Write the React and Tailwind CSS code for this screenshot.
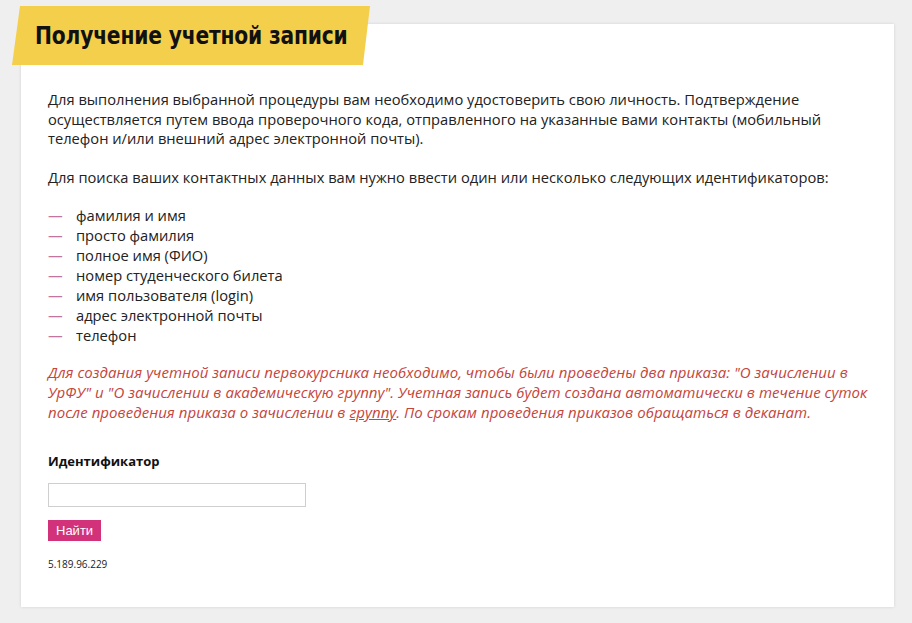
import React from "react";

const items = [
  "фамилия и имя",
  "просто фамилия",
  "полное имя (ФИО)",
  "номер студенческого билета",
  "имя пользователя (login)",
  "адрес электронной почты",
  "телефон",
];

const App = () => {
  return (
    <div className="min-h-[623px] bg-[#efefef] pt-[24px] pl-[21px] pr-[18px] pb-[15px] font-['Open_Sans',sans-serif]">
      <div className="flow-root bg-white shadow-[0_0_3px_rgba(0,0,0,0.12)] min-h-[583px]">
        {/* Title banner */}
        <div className="-ml-[9px] -mt-[18px] w-[358px] h-[59px] bg-[#f4cf4b] [clip-path:polygon(8px_0,100%_0,calc(100%-7px)_100%,0_100%)] flex items-center pl-[23px]">
          <h1 className="font-['DejaVu_Sans_Condensed','DejaVu_Sans',sans-serif] font-bold text-[25px] text-[#111] tracking-[-0.2px] scale-x-[0.9] origin-left whitespace-nowrap">
            Получение учетной записи
          </h1>
        </div>

        <div className="pl-[27px] pr-[12px] pt-[25px] text-[14.7px] leading-[19.5px] text-[#222]">
          <p>
            Для выполнения выбранной процедуры вам необходимо удостоверить свою личность. Подтверждение
            осуществляется путем ввода проверочного кода, отправленного на указанные вами контакты (мобильный
            телефон и/или внешний адрес электронной почты).
          </p>

          <p className="mt-[19px]">
            Для поиска ваших контактных данных вам нужно ввести один или несколько следующих идентификаторов:
          </p>

          <ul className="mt-[18px] leading-[20px]">
            {items.map((t) => (
              <li key={t} className="flex">
                <span className="w-[28px] text-[#c2769f]">—</span>
                <span>{t}</span>
              </li>
            ))}
          </ul>

          <p className="mt-[17px] italic text-[#c4453c] text-[15px] tracking-[0.05px] leading-[20px] whitespace-nowrap">
            Для создания учетной записи первокурсника необходимо, чтобы были проведены два приказа: "О зачислении в
            <br />
            УрФУ" и "О зачислении в академическую группу". Учетная запись будет создана автоматически в течение суток
            <br />
            после проведения приказа о зачислении в <span className="underline">группу</span>. По срокам проведения приказов обращаться в деканат.
          </p>

          <div className="mt-[30px] font-bold text-[13px] text-[#111]">Идентификатор</div>

          <input
            type="text"
            className="mt-[11px] block w-[258px] h-[24px] border border-[#cfcfcf] bg-white outline-none"
          />

          <button className="mt-[13px] block bg-[#d2327a] text-white font-['Liberation_Sans',sans-serif] text-[13px] leading-[21px] px-[8px] h-[21px]">
            Найти
          </button>

          <div className="mt-[14px] text-[10px] text-[#222]">5.189.96.229</div>
        </div>
      </div>
    </div>
  );
};

export default App;
